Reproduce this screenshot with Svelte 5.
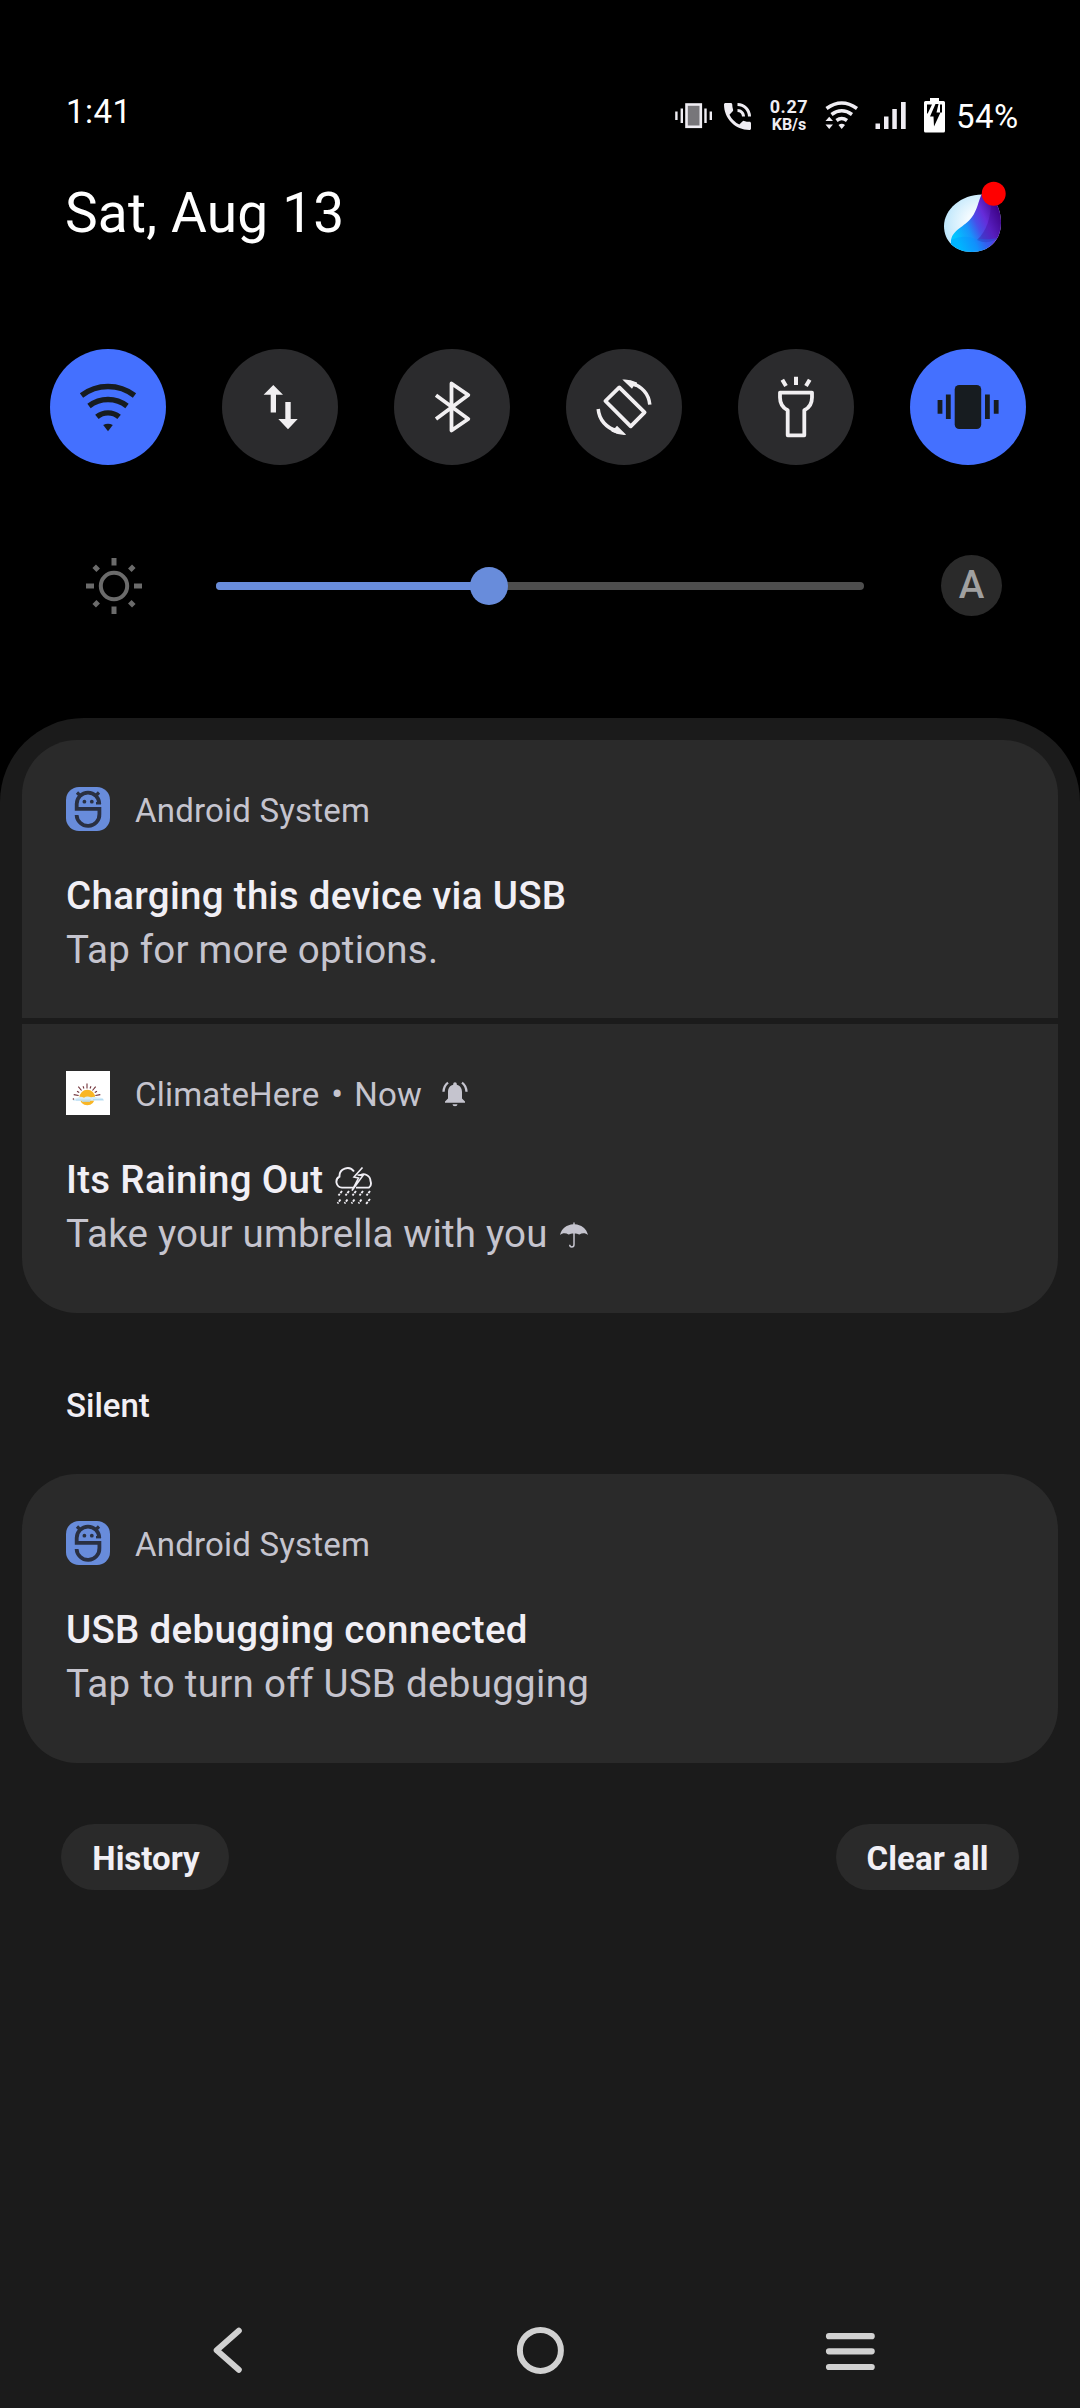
<script>
  const tiles = [
    { name: 'wifi', on: true },
    { name: 'data', on: false },
    { name: 'bluetooth', on: false },
    { name: 'rotate', on: false },
    { name: 'torch', on: false },
    { name: 'vibrate', on: true }
  ];
  const alerts = [
    { app: 'Android System', icon: 'system', title: 'Charging this device via USB', body: 'Tap for more options.' },
    { app: 'ClimateHere', icon: 'climate', time: 'Now', title: 'Its Raining Out', body: 'Take your umbrella with you', weather: true }
  ];
  const silent = [
    { app: 'Android System', icon: 'system', title: 'USB debugging connected', body: 'Tap to turn off USB debugging' }
  ];
  const brightness = 42.1;
  const rays = [-80, -60, -40, -20, 0, 20, 40, 60, 80];
</script>

{#snippet card(n)}
  <article class="card">
    <header class="card-head">
      {#if n.icon === 'system'}
        <svg class="app-icon" viewBox="0 0 44 44">
          <rect width="44" height="44" rx="13" fill="#688cdb" />
          <g fill="none" stroke="#2a3042" stroke-width="3.800">
            <path d="M33.300 17A11.300 11.300 0 0 0 10.700 17V21.800H33.400V27A11.400 11.400 0 0 1 10.600 28" />
            <path d="M11 5.500L15 9.500M33 5.500L29 9.500" stroke-width="3.200" />
            <path d="M30 16.200H35" stroke-width="2.400" />
          </g>
          <circle cx="18.400" cy="14.700" r="1.900" fill="#2a3042" />
          <circle cx="25.800" cy="14.700" r="1.900" fill="#2a3042" />
        </svg>
      {:else}
        <svg class="app-icon" viewBox="0 0 44 44">
          <rect width="44" height="44" fill="#fff" />
          {#each rays as a, i}
            <path d={i % 2 ? 'M21 14.5V17' : 'M21 12.5V17.5'} stroke="#713239" stroke-width="1.100" transform="rotate({a} 21 26)" />
          {/each}
          <circle cx="21.300" cy="26.500" r="7.800" fill="#f9b625" />
          <path d="M7 29.800Q7 27.400 11 27.300Q14 24.500 18 26.700Q21 24.500 25 26.300Q29 25 31 26.600Q38 26 38 29.800Z" fill="#d7edf9" />
          <path d="M10 29H25M16 30.300H24M27 28.600H37" stroke="#b3daf1" stroke-width="1" />
          <circle cx="7.400" cy="28" r=".8" fill="#713239" />
        </svg>
      {/if}
      <span class="app-name">{n.app}</span>
      {#if n.time}
        <span class="dot">•</span>
        <span class="time">{n.time}</span>
        <svg class="bell" viewBox="0 0 26 26" fill="#c5c4ce">
          <path d="M13 1.200a1.800 1.800 0 0 1 1.800 1.800v.7c3.600.8 5.200 3.800 5.200 7.300v6.400l3 3v1.400H3v-1.400l3-3V11c0-3.500 1.600-6.500 5.200-7.300V3A1.800 1.800 0 0 1 13 1.200Z" />
          <path d="M10.500 23.200h5a2.500 2 0 0 1-5 0Z" />
          <path d="M1.500 10.800C1.700 6.500 3.500 3.600 6 1.700M24.500 10.800C24.300 6.500 22.500 3.600 20 1.700" fill="none" stroke="#c5c4ce" stroke-width="2.300" />
        </svg>
      {/if}
    </header>
    <div class="title">
      <span>{n.title}</span>
      {#if n.weather}
        <svg class="storm" viewBox="0 0 38 38" fill="none" stroke="#f1eff5" stroke-width="1.900">
          <path d="M18.500 20.600H7A5.800 5.800 0 0 1 4.500 9.700A8 8 0 0 1 19 4.500M24.500 8.500A7 7 0 0 1 35.500 14C36.500 17 35.500 19.500 34 20.600H21" />
          <path d="M27.500.5L19 10L23.500 11L17 23.500L28 8.500L22.500 8" stroke-width="1.600" />
          <path d="M7 24L3.500 28.500M14 24L10.500 28.500M21 24L17.500 28.500M28 24L24.500 28.500M35 24L31.500 28.500M5.500 32.500L2.500 36.500M12.500 32.500L9.500 36.500M19.500 32.500L16.500 36.500M26.500 32.500L23.500 36.500M35 32L31 37" stroke-dasharray="2.600 1" />
        </svg>
      {/if}
    </div>
    <div class="body">
      <span>{n.body}</span>
      {#if n.weather}
        <svg class="umbrella" viewBox="0 0 28 26">
          <path d="M0 13C1.500 6.500 7 2.600 13.300 2.300V.5h1.400v1.800C21 2.600 26.500 6.500 28 13C25.500 10.800 22 10.800 19.500 12.600C17 11 11 11 8.500 12.600C6 10.800 2.500 10.800 0 13Z" fill="#c5c4ce" />
          <path d="M14 11V22.500Q14 25 11.700 25Q9.800 25 9.700 22.800" fill="none" stroke="#c5c4ce" stroke-width="1.500" />
        </svg>
      {/if}
    </div>
  </article>
{/snippet}

<div class="screen">
  <div class="status">
    <span class="clock">1:41</span>
    <div class="status-icons">
      <svg width="37" height="44" viewBox="675 95 37 44">
        <rect x="686.500" y="104.500" width="14.300" height="22.300" fill="#77767a" stroke="#efedf3" stroke-width="2.600" />
        <path d="M681.800 108.500V123M676.400 111.500V120M705.500 108.500V123M710.800 111.500V120" stroke="#efedf3" stroke-width="2.400" />
      </svg>
      <svg class="phone" width="29" height="44" viewBox="723 95 29 44">
        <path transform="translate(719.500 98.500) scale(1.500)" fill="#efedf3" d="M20 15.500c-1.250 0-2.450-.2-3.570-.570a1.020 1.020 0 0 0-1.020.240l-2.200 2.200a15.045 15.045 0 0 1-6.590-6.590l2.200-2.210a.96.960 0 0 0 .250-1A11.360 11.360 0 0 1 8.500 4c0-.550-.450-1-1-1H4c-.550 0-1 .450-1 1 0 9.390 7.610 17 17 17 .550 0 1-.450 1-1v-3.500c0-.550-.450-1-1-1zM19 12h2a9 9 0 0 0-9-9v2c3.870 0 7 3.130 7 7zm-4 0h2c0-2.760-2.240-5-5-5v2c1.660 0 3 1.340 3 3z" />
      </svg>
      <div class="speed"><span class="rate">0.27</span><span class="unit">KB/s</span></div>
      <svg class="wifi-s" width="34" height="44" viewBox="825 95 34 44" fill="none" stroke="#efedf3" stroke-width="3.500">
        <path d="M826.500 108.500Q841.700 97.500 857 108.500M831.500 114.500Q841.700 107 852 114.500M836.500 120.500Q841.700 116.500 847 120.500" />
        <path d="M838.500 125Q841.700 122.500 845 125L841.700 129ZM825.500 121H833L829.200 116.800ZM825.500 124.500H833L829.200 129Z" fill="#efedf3" stroke="none" />
      </svg>
      <svg class="bars" width="31" height="44" viewBox="875 95 31 44" fill="#efedf3">
        <path d="M875.500 123.500h4.500v5.500h-4.500zM884 116.500h4.500V129h-4.500zM892.300 109h4.500v20h-4.500zM901 102h4.700v27H901z" />
      </svg>
      <svg class="battery" width="21" height="44" viewBox="924 95 21 44">
        <path d="M930 98h9v3h4.500a1.500 1.500 0 0 1 1.500 1.500v28.500a1.500 1.500 0 0 1-1.500 1.500h-18a1.500 1.500 0 0 1-1.500-1.500v-28.500a1.500 1.500 0 0 1 1.500-1.500H930z" fill="#fff" />
        <path d="M927 104.500h5l-4.300 9h-.7zM940 104.500h2v8h-2z" fill="#000" />
        <path d="M935.500 104L930 116.500H933.500L934 126.500L940.500 112.500H936.500L938.500 104Z" fill="#000" />
      </svg>
      <span class="percent">54%</span>
    </div>
  </div>

  <div class="date-row">
    <span class="date">Sat, Aug 13</span>
    <svg width="66" height="72" viewBox="940 181 66 72">
      <defs>
        <radialGradient id="pearl" cx=".6" cy=".5" r=".6"><stop offset=".3" stop-color="#f4fbff" /><stop offset="1" stop-color="#b5e3fb" /></radialGradient>
        <linearGradient id="flow" gradientUnits="userSpaceOnUse" x1="955" y1="236" x2="1000" y2="215">
          <stop offset="0" stop-color="#00c5ff" /><stop offset=".3" stop-color="#1893fb" /><stop offset=".5" stop-color="#474fe9" /><stop offset=".7" stop-color="#652cd9" /><stop offset="1" stop-color="#43078f" />
        </linearGradient>
        <clipPath id="blob"><path d="M983 194.500C993 195 1001 207 1001 223C1001 241 988 252 972 252C955 252 944 241 944 226C944 209 962 194 983 194.500Z" /></clipPath>
      </defs>
      <g clip-path="url(#blob)">
        <rect x="940" y="190" width="66" height="66" fill="url(#pearl)" />
        <path d="M984 190C979 197 978 209 972 217C965 227 951 230 951 242V256H1006V190Z" fill="url(#flow)" />
        <path d="M991 196C992 215 987 231 977 240Q989 246 1001 236V190Z" fill="#380183" opacity=".3" />
        <path d="M951 240Q963 234 976 239Q990 240 997 238L980 256H950Z" fill="#008bff" opacity=".28" />
      </g>
      <circle cx="993.700" cy="193.700" r="12" fill="#f00" />
    </svg>
  </div>

  <div class="tiles">
    {#each tiles as t}
      <div class="tile" class:on={t.on}>
        <svg viewBox="0 0 116 116" fill="none" stroke-width="3.800">
          {#if t.name === 'wifi'}
            <path d="M31.500 46.500A43.500 43.500 0 0 1 84.500 46.500M39 57A30.800 30.800 0 0 1 77 57M46.900 67.900A17.400 17.400 0 0 1 69.100 67.900" stroke-width="5.400" />
            <path class="fill" d="M53.200 76Q58 73.500 62.800 76L58 82.300Z" />
          {:else if t.name === 'data'}
            <path class="fill" d="M51.300 36L61 45.700H54V63.400H48.700V45.700H41.600ZM66 80.200L56.300 70H63.300V53H68.700V70H75.700Z" />
          {:else if t.name === 'bluetooth'}
            <path d="M42 46.300L74.300 70L57.500 81.500V34.500L74.300 46L42 70" stroke-linejoin="round" />
          {:else if t.name === 'rotate'}
            <path d="M53.300 38.400L39.400 52L64.700 77.300L78.600 63.300Z" stroke-linejoin="round" />
            <path d="M64 33.300Q82.500 39.500 83.800 55.700M52 83Q33.500 76 32.200 60" stroke-width="3.500" />
            <path class="fill" d="M56.300 30.600L66 39.700L67.500 37.200L70.500 38L71 33.500Q63 29.800 56.300 30.600ZM60.200 85.800L51 76.700L49 79L46 78.500L45.500 82.500Q53 86.500 60.200 85.800Z" />
          {:else if t.name === 'torch'}
            <path d="M42 43.600H74V48.500Q74 57.500 66.300 61.300V86.300H49.700V61.300Q42 57.500 42 48.500Z" stroke-linejoin="round" />
            <path d="M58 27.700V36M44.300 30.700L48 37M71.700 30.700L68 37" stroke-width="4" />
          {:else}
            <rect class="fill" x="44.700" y="36" width="26.500" height="44" rx="4.500" />
            <path d="M30 51V64.700M38.300 45.500V70M77.400 45.500V70M86.200 51V64.700" stroke-width="4.800" />
          {/if}
        </svg>
      </div>
    {/each}
  </div>

  <div class="brightness">
    <svg class="sun" viewBox="0 0 60 60" fill="none" stroke="#6b6b6b">
      <circle cx="30" cy="30" r="13.200" stroke-width="4" />
      <path d="M30 2V9.500M30 50.500V58M2 30H10M50 30H58" stroke-width="5" />
      <path d="M10.200 10.200L14.200 14.200M49.800 10.200L45.800 14.200M10.200 49.800L14.200 45.800M49.800 49.800L45.800 45.800" stroke-width="5" />
    </svg>
    <div class="track">
      <div class="level" style="width: {brightness}%"><span class="knob"></span></div>
    </div>
    <span class="auto">A</span>
  </div>

  <main class="shade">
    <section class="group">
      {#each alerts as n}{@render card(n)}{/each}
    </section>
    <h2>Silent</h2>
    <section class="group quiet">
      {#each silent as n}{@render card(n)}{/each}
    </section>
    <div class="actions">
      <button class="history">History</button>
      <button class="clear">Clear all</button>
    </div>
    <nav>
      <svg width="60" height="60" viewBox="0 0 60 60" fill="none"><path d="M35.800 10.700L13.700 30.300L35.800 49.700" stroke-width="6" stroke-linecap="round" stroke-linejoin="round" /></svg>
      <svg width="60" height="60" viewBox="0 0 60 60" fill="none"><circle cx="30.400" cy="30.400" r="20.500" stroke-width="6" /></svg>
      <svg width="60" height="60" viewBox="0 0 60 60" fill="none"><path d="M12 16.200H54.700M12 31.300H54.700M12 47H54.700" stroke-width="6.200" stroke-linecap="round" /></svg>
    </nav>
  </main>
</div>

<style>
  :global(body) { margin: 0; background: #000; }
  .screen {
    width: 1080px; height: 2408px; box-sizing: border-box; padding-top: 90px;
    display: flex; flex-direction: column; background: #000; color: #fff;
    font-family: Roboto, sans-serif; overflow: hidden;
  }
  svg { display: block; flex: none; }
  span { white-space: nowrap; }
  .status { display: flex; justify-content: space-between; padding: 0 61px 0 66px; height: 49px; font-size: 33px; line-height: 44px; }
  .clock { letter-spacing: .5px; }
  .status-icons { display: flex; padding-top: 5px; }
  .phone { margin-left: 11px; }
  .speed { width: 46px; margin-left: 14px; display: flex; flex-direction: column; align-items: center; font-weight: 700; color: #efedf3; }
  .rate { font-size: 18px; line-height: 18px; padding-top: 3px; letter-spacing: .6px; }
  .unit { font-size: 16px; line-height: 18px; }
  .wifi-s { margin-left: 13px; }
  .bars { margin-left: 16px; }
  .battery { margin-left: 18px; }
  .percent { width: 63px; margin-left: 11px; letter-spacing: .5px; }
  .date-row { display: flex; justify-content: space-between; margin-top: 42px; height: 72px; padding: 0 74px 0 65px; }
  .date { font-size: 55px; line-height: 64px; letter-spacing: .2px; }
  .tiles { display: flex; gap: 56px; margin-top: 96px; padding-left: 50px; }
  .tile { width: 116px; height: 116px; border-radius: 50%; background: #2b2b2d; color: #f1eff1; }
  .tile.on { background: #4470ff; color: #171c20; }
  .tile svg { stroke: currentColor; }
  .tile .fill { fill: currentColor; stroke: none; }
  .brightness { display: flex; align-items: center; margin-top: 90px; height: 61px; padding: 0 78px 0 84px; }
  .sun { width: 60px; height: 60px; }
  .track { width: 648px; height: 8px; margin-left: 72px; border-radius: 4px; background: #4e4e4e; }
  .level { position: relative; height: 8px; border-radius: 4px; background: #688cdb; }
  .knob { position: absolute; right: -19px; top: -15px; width: 38px; height: 38px; border-radius: 50%; background: #688cdb; }
  .auto { width: 61px; height: 61px; margin-left: 77px; border-radius: 50%; background: #2a2a2a; color: #a0a0a0; font-size: 38.500px; font-weight: 500; line-height: 59px; text-align: center; }
  .shade { flex: 1; margin-top: 102px; padding: 22px 22px 0; border-radius: 84px 84px 0 0; background: #1b1b1b; display: flex; flex-direction: column; }
  .group { display: flex; flex-direction: column; gap: 6px; border-radius: 55px; overflow: hidden; }
  .card { box-sizing: border-box; height: 289px; padding: 47px 44px 0; background: #2a2a2a; }
  .card:first-child:not(:last-child) { height: 278px; }
  .card-head { display: flex; height: 44px; font-size: 33px; line-height: 48px; color: #c5c4ce; letter-spacing: .2px; }
  .app-icon { width: 44px; height: 44px; margin-right: 25px; }
  .dot { margin-left: 12px; width: 12px; font-size: 35px; display: flex; justify-content: center; }
  .time { margin-left: 11px; }
  .bell { width: 26px; height: 26px; margin: 10px 0 0 20px; }
  .title, .body { display: flex; font-size: 38.500px; line-height: 54px; }
  .title { margin-top: 38px; font-weight: 500; color: #f1eff5; letter-spacing: .31px; }
  .body { color: #c5c4ce; letter-spacing: .2px; }
  .quiet .body { letter-spacing: .3px; }
  .storm { width: 38px; height: 38px; margin: 14px 0 0 12px; }
  .umbrella { width: 28px; height: 26px; margin: 15px 0 0 12px; }
  h2 { margin: 71px 0 46px 44px; font-size: 33px; line-height: 44px; font-weight: 500; color: #f1eff5; }
  .actions { display: flex; justify-content: space-between; margin: 61px 39px 0; }
  button { height: 66px; border: 0; border-radius: 33px; padding: 3px 0 0; background: #2a2a2a; color: #f1eff5; font: 700 33px/63px Roboto, sans-serif; }
  .history { width: 168px; padding-left: 2px; }
  .clear { width: 183px; letter-spacing: .1px; }
  nav { margin-top: auto; height: 88px; display: flex; justify-content: space-between; padding: 0 181px; stroke: #d1d1d1; }
</style>
